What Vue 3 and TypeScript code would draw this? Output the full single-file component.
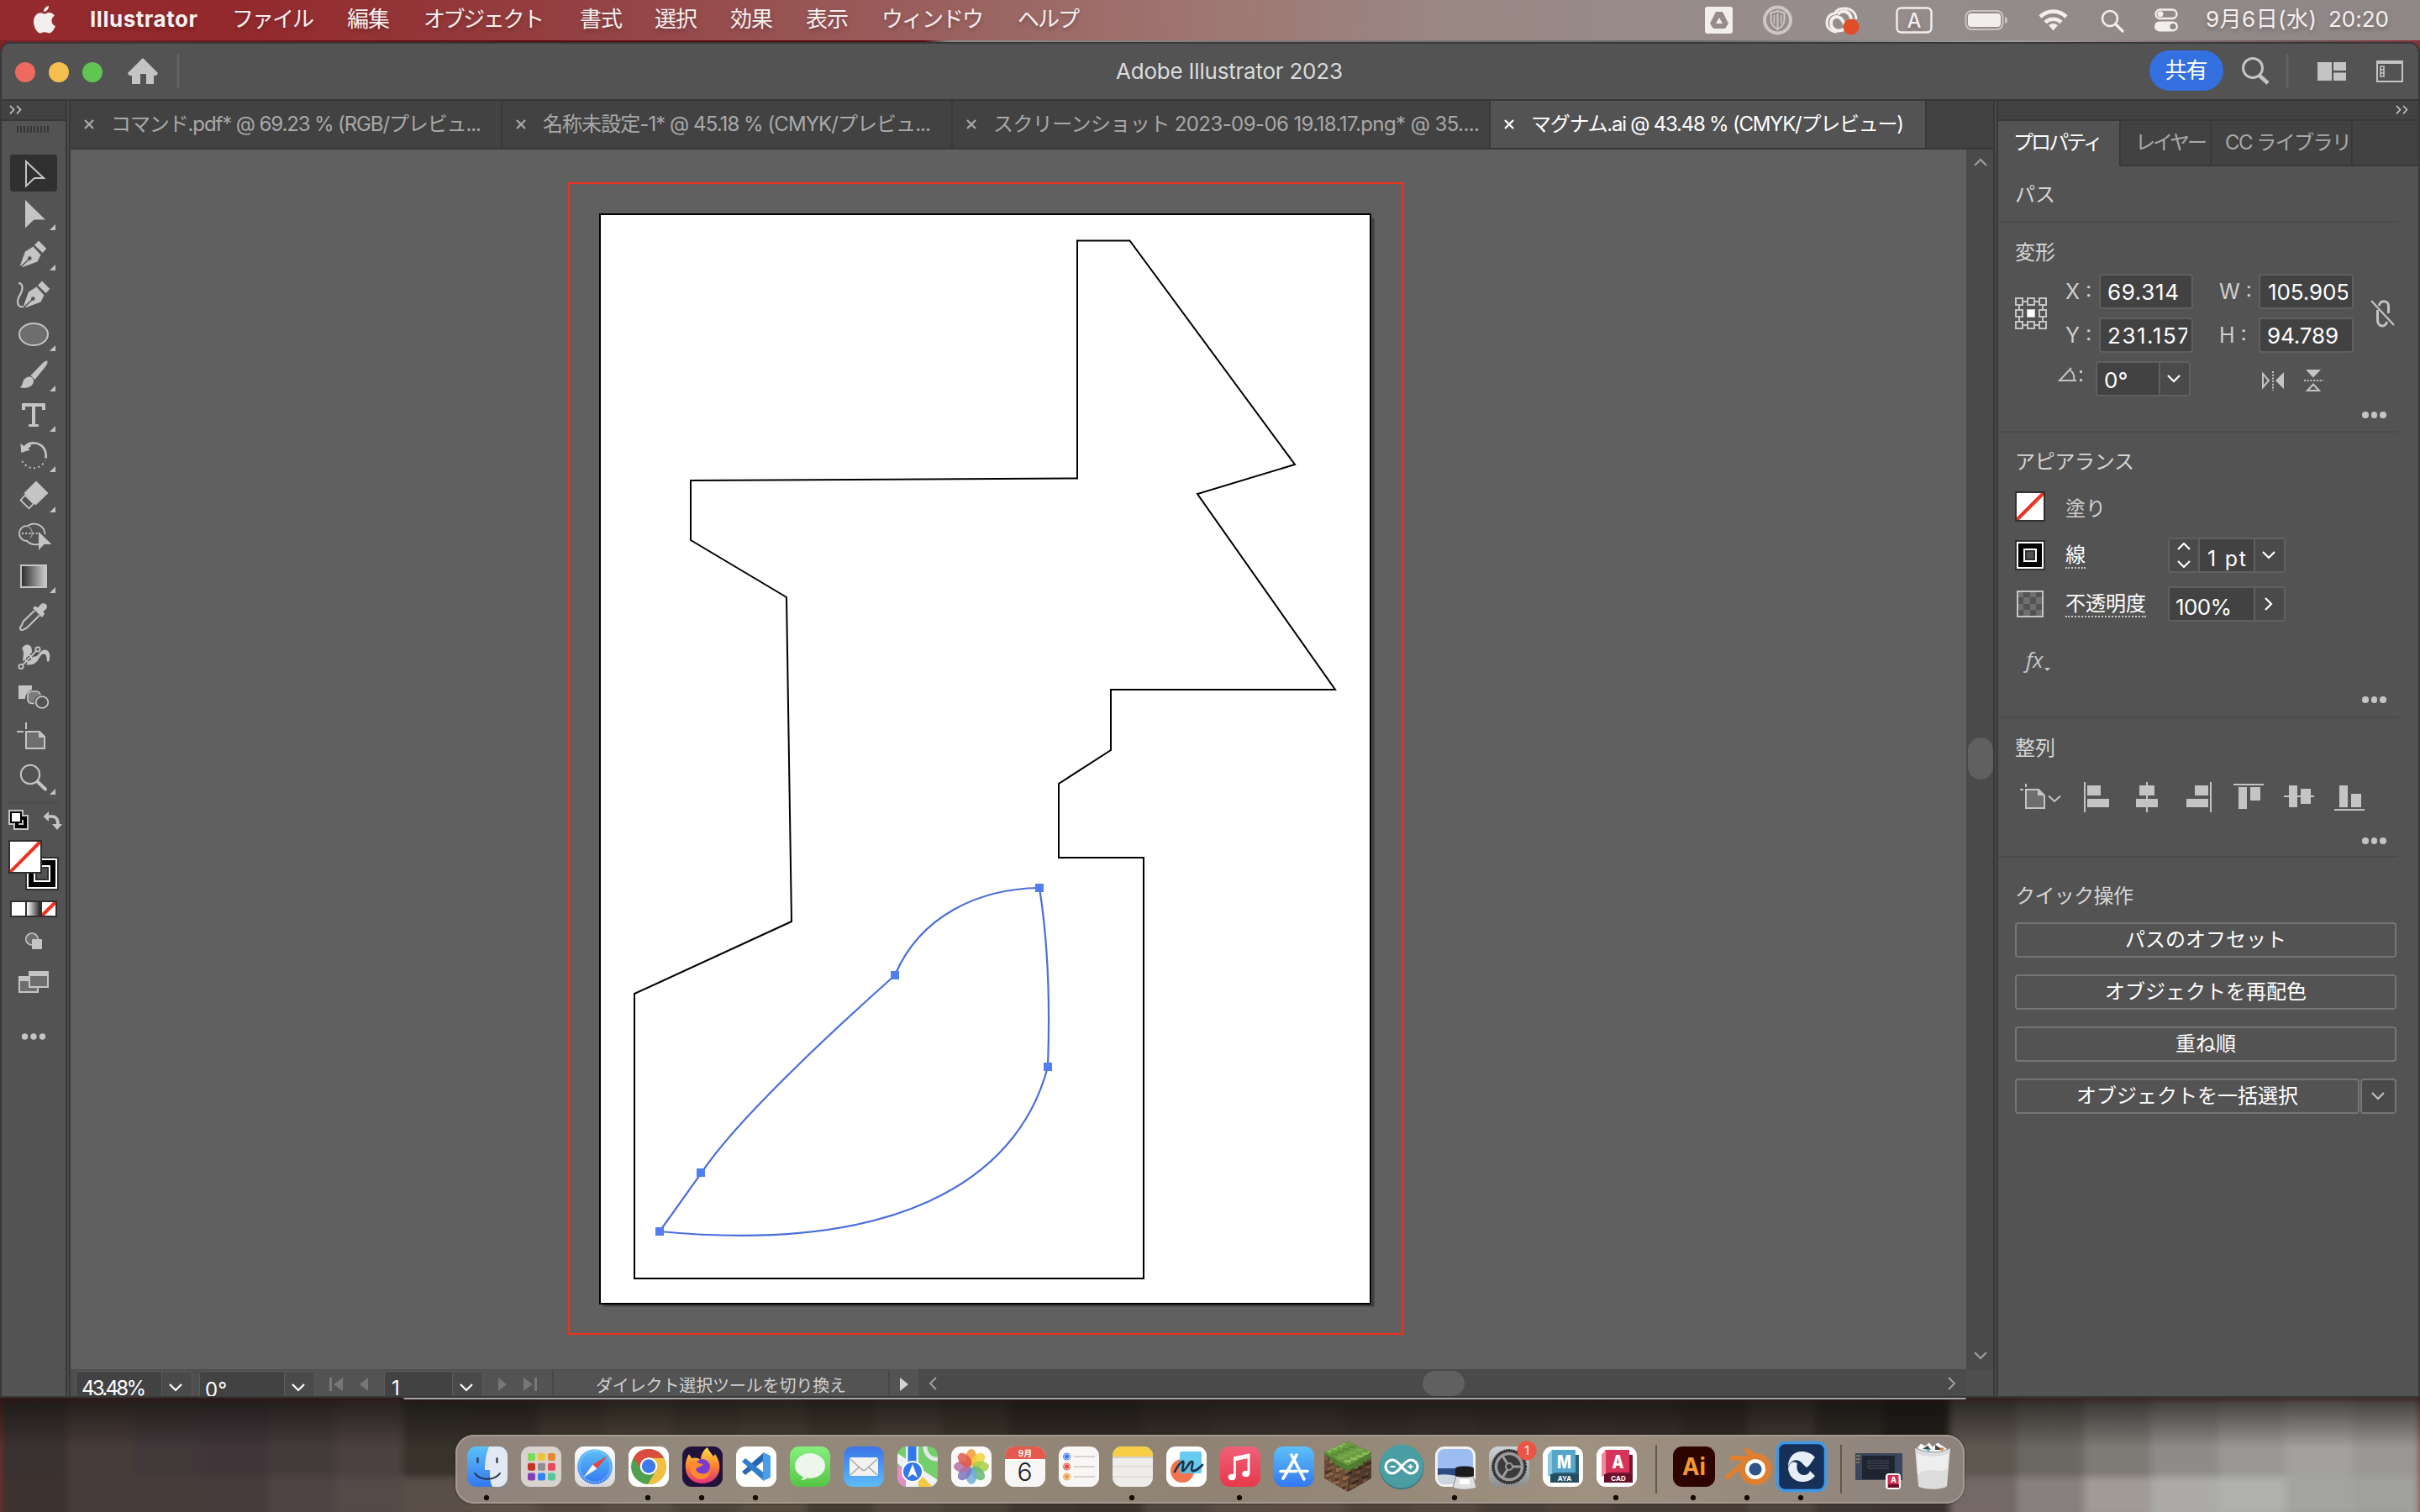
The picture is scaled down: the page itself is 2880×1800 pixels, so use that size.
<script setup lang="ts">
import type { Directive } from 'vue'

// Adjusts tracking so that a label takes the given width in pixels.
const vFit: Directive<HTMLElement, number> = {
  mounted(el, binding) {
    const count = (el.textContent ?? '').trim().length
    if (count < 2) return
    const gap = (binding.value - el.getBoundingClientRect().width) / (count - 1)
    el.style.letterSpacing = `${gap}px`
    el.style.marginRight = `${-gap}px`
  },
}

interface MenuItem { label: string; width: number; slot: number }
const menus: MenuItem[] = [
  { label: 'ファイル', width: 98, slot: 137 },
  { label: '編集', width: 51, slot: 91 },
  { label: 'オブジェクト', width: 144, slot: 186 },
  { label: '書式', width: 51, slot: 89 },
  { label: '選択', width: 51, slot: 90 },
  { label: '効果', width: 51, slot: 90 },
  { label: '表示', width: 51, slot: 90 },
  { label: 'ウィンドウ', width: 122, slot: 162 },
  { label: 'ヘルプ', width: 74, slot: 90 },
]

interface DocTab { title: string; width: number; text: number; active?: boolean }
const tabs: DocTab[] = [
  { title: 'コマンド.pdf* @ 69.23 % (RGB/プレビュ...', width: 514, text: 441 },
  { title: '名称未設定-1* @ 45.18 % (CMYK/プレビュ...', width: 536, text: 462 },
  { title: 'スクリーンショット 2023-09-06 19.18.17.png* @ 35....', width: 640, text: 579 },
  { title: 'マグナム.ai @ 43.48 % (CMYK/プレビュー)', width: 519, text: 444, active: true },
]

interface QuickAction { label: string; width: number }
const actions: QuickAction[] = [
  { label: 'パスのオフセット', width: 192 },
  { label: 'オブジェクトを再配色', width: 240 },
  { label: '重ね順', width: 72 },
]

const wallTop = ['#3a3230', '#463c39', '#41383a', '#40363a', '#443b3b', '#4b4140', '#37322a', '#38312a', '#463d34', '#4d4439', '#453d33', '#4a4237', '#41392f', '#4a4138', '#40382f', '#342d27', '#332d28', '#3a332c', '#3e362f', '#403830', '#3a332d', '#3d352f', '#39322d', '#3c342f', '#3a322d', '#342d28', '#423a35', '#2f2a25', '#241f1b', '#5e5851', '#6b6762', '#7e7a76', '#8e8c8a', '#999897', '#a2a1a0', '#999897']
const wallBottom = ['#3c3330', '#463c39', '#463c3a', '#463c3b', '#4e4445', '#544a48', '#5a4e48', '#5e5147', '#54493f', '#5a4f44', '#4e453a', '#574c40', '#453c32', '#54493e', '#4b4237', '#3f362e', '#3c332c', '#51463e', '#594c43', '#5a4c42', '#4f443b', '#53473e', '#493f37', '#4d4239', '#483d36', '#473c35', '#4f453f', '#3f3732', '#3e3432', '#746966', '#87807e', '#a19a97', '#acaba9', '#b0b0af', '#a3a3a2', '#a0a09f']

const launchColors = ['#7bdc54', '#f0c23c', '#e28a32', '#c53325', '#8f8f93', '#e6495c', '#8540b5', '#2f86f2', '#58c59b']
const petals = ['#f39a35', '#f2d13b', '#a9cc48', '#66b774', '#6caedb', '#7d74bd', '#b56fa2', '#e4564a']
const grass = Array.from({ length: 46 }, (_, i) => ({
  x: 6 + ((i * 37) % 52),
  y: 8 + ((i * 23) % 24),
  fill: ['#77a94a', '#5b8a37', '#8abb58'][i % 3],
}))
const soil = Array.from({ length: 90 }, (_, i) => ({
  x: 4 + ((i * 29) % 56),
  y: 26 + ((i * 17) % 42),
  fill: ['#7d5c42', '#4a3527', '#94694a', '#5e4431'][i % 4],
}))
</script>

<template>
  <div class="screen">
    <header class="menubar">
      <svg class="apple" width="28" height="34" viewBox="0 0 28 34"><path fill="#f4eeee" d="M19 1c.3 3.500-2.600 7-6 7-.4-3.200 2.700-6.600 6-7zM19.300 9c3 0 5.400 1.600 6.600 3.700-5.200 3-4.300 10.300 1 12.300-1.400 4-4.400 8.500-7.400 8.500-2 0-2.800-1.200-5.300-1.200-2.500 0-3.400 1.200-5.200 1.200C5.400 33.500 1 26.500 1 20 1 13.400 5 9.200 9.300 9.200c2.300 0 3.900 1.400 5.200 1.400C15.700 10.600 17.300 9 19.300 9z"/></svg>
      <span class="app-name"><span v-fit="128">Illustrator</span></span>
      <span v-for="m in menus" :key="m.label" class="menu" :style="{ width: m.slot + 'px' }"><span v-fit="m.width">{{ m.label }}</span></span>
      <span class="grow"></span>
      <svg width="576" height="48" viewBox="2020 0 576 48">
        <g fill="#f2eeee">
          <path fill-rule="evenodd" d="M2032 8h27a3 3 0 0 1 3 3v26a3 3 0 0 1-3 3h-27a3 3 0 0 1-3-3V11a3 3 0 0 1 3-3zM2042 14l-7 14 4 6h14l4-6-7-14zM2046 21l4 7h-8z"/>
          <g opacity=".6"><circle cx="2115.500" cy="24" r="15.500" fill="none" stroke="#f2eeee" stroke-width="4"/><path d="M2115.500 13l8 2.500v8c0 5-3.500 9-8 11.500-4.500-2.500-8-6.500-8-11.500v-8z" fill="none" stroke="#f2eeee" stroke-width="2"/><path d="M2114.500 16h2v18h-2zM2110.500 18h1.600v10h-1.600zM2119 18h1.600v10h-1.600z"/></g>
          <path d="M2186 38c-7 0-12-5-12-11 0-7 5-11 10-11 1-4 5-6 11-6 8 0 14 5 14 13" fill="none" stroke="#f2eeee" stroke-width="3"/>
          <path d="M2196 34c-3 2-9 4-13 1-6-4-5-14 2-15 6-1 8 5 12 12M2187 17c3-4 10-5 14 0 3 4 2 8 1 11" fill="none" stroke="#f2eeee" stroke-width="4"/>
          <circle cx="2203" cy="32" r="9.500" fill="#e04e26"/>
          <rect x="2257.500" y="9.500" width="41" height="29" rx="5" fill="none" stroke="#f2eeee" stroke-width="2.400"/>
          <text x="2278" y="32.500" text-anchor="middle" font-size="24" font-weight="500">A</text>
          <rect x="2339.500" y="13" width="44" height="22" rx="7" fill="none" stroke="#f2eeee" stroke-opacity=".55" stroke-width="2"/>
          <rect x="2342" y="16" width="39" height="16" rx="4"/><path d="M2386 20c4 1 4 7 0 8z" opacity=".6"/>
          <g fill="none" stroke="#f2eeee" stroke-width="4.600"><path d="M2428 20a22 22 0 0 1 31 0"/><path d="M2434 26.500a14 14 0 0 1 19 0"/></g><path d="M2443.500 36.500l-5.500-6.500a9 9 0 0 1 11 0z"/>
          <g fill="none" stroke="#f2eeee" stroke-width="2.600"><circle cx="2511" cy="22" r="9"/><path d="M2518 29l8 8" stroke-linecap="round" stroke-width="3.200"/></g>
          <rect x="2565.500" y="11.500" width="25" height="10.500" rx="5.200" fill="none" stroke="#f2eeee" stroke-width="2.400"/><circle cx="2571" cy="16.700" r="3.400"/>
          <rect x="2564" y="25.500" width="28" height="12" rx="6"/><circle cx="2586" cy="31.500" r="3.600" fill="#8e8686"/>
        </g>
      </svg>
      <span class="date"><span v-fit="132">9月6日(水)</span></span>
      <span class="time"><span v-fit="72">20:20</span></span>
    </header>
    <div class="strip"></div>

    <main class="window">
      <div class="titlebar">
        <svg width="240" height="66" viewBox="2 52 240 66">
          <circle cx="30" cy="86" r="12" fill="#ed6a5e"/><circle cx="70" cy="86" r="12" fill="#f5bf4f"/><circle cx="110" cy="86" r="12" fill="#61c554"/>
          <path fill="#c4c4c4" d="M170 69l18 18-2 3h-3v10h-9V88h-7v12h-10V90h-3l-2-3z"/>
          <path d="M212 64v40" stroke="#636363" stroke-width="3"/>
        </svg>
        <span class="app-title"><span v-fit="270">Adobe Illustrator 2023</span></span>
        <button class="share"><span v-fit="51">共有</span></button>
        <svg class="title-tools" width="220" height="66" viewBox="2658 52 220 66">
          <g fill="none" stroke="#c4c4c4" stroke-width="3"><circle cx="2681" cy="81" r="11.500"/><path d="M2689 90l10 9" stroke-width="4.600"/></g>
          <path d="M2722 64v40" stroke="#636363" stroke-width="3"/>
          <path fill="#c4c4c4" d="M2758 74h17v22h-17zM2777 74h15v10h-15zM2777 86.500h15V96h-15z"/>
          <path fill="#c4c4c4" fill-rule="evenodd" d="M2828 72h32v26h-32zM2830 76v20h28V76z"/><path fill="none" stroke="#c4c4c4" stroke-width="1.600" d="M2833 79h4v12h-4zM2833 83h4M2833 87h4"/>
        </svg>
      </div>

      <div class="body">
        <aside class="toolbar">
          <div class="tool-head"><svg width="76" height="22" viewBox="2 120 76 22"><path d="M12 126l4.500 4.500L12 135.500M20 126l4.500 4.500-4.500 5" fill="none" stroke="#c4c4c4" stroke-width="1.700"/></svg></div>
          <div class="grip"><i v-for="n in 10" :key="n"></i></div>
          <div class="tools">
            <svg viewBox="2 0 76 48"><rect x="12" y="2" width="56" height="44" rx="4" fill="#303030"/><path d="M31 10.200L52 30H41l-10 9.500z" fill="none" stroke="#c4c4c4" stroke-width="2"/></svg>
            <svg viewBox="2 0 76 48"><path d="M30 8l24 23.600H40.500L30 41.500z"/><path d="M59 44h7v-7z"/></svg>
            <svg viewBox="2 0 76 48"><path d="M46 8.500l9.300 9.500-4.600 5L41 13.800z"/><path d="M24 38l6-16.500 9.500-6 9 10-4 8L27 40z"/><path d="M25 39.500L35 30" stroke="#535353" stroke-width="1.500"/><circle cx="35.300" cy="29.600" r="2.300" fill="#535353"/><path d="M59 44h7v-7z"/></svg>
            <svg viewBox="2 0 76 48"><path d="M50 8.500l9.300 9.500-4.600 5L45 13.800z"/><path d="M28 38l6-16.500 9.500-6 9 10-4 8L31 40z"/><path d="M29 39.500L39 30" stroke="#535353" stroke-width="1.500"/><circle cx="39.300" cy="29.600" r="2.300" fill="#535353"/><path d="M22 11c5 0 5 5 4 9-1 5-5 7-5 13 0 5 3 7 7 6" fill="none" stroke="#c4c4c4" stroke-width="2.200"/></svg>
            <svg viewBox="2 0 76 48"><ellipse cx="40" cy="24" rx="17" ry="13" fill="#6e6e6e" stroke="#c4c4c4" stroke-width="2"/><path d="M59 44h7v-7z"/></svg>
            <svg viewBox="2 0 76 48"><path d="M36.500 25L51 10c2-2 5-3 5.500-2s-.5 4-2.500 6.500L41.500 30z"/><path d="M35 26.500c3 0 5.500 2.500 5 6-1 6-9 9-16.500 6.500 3-1.500 3-4 4-7s4-5.500 7.500-5.500z"/><path d="M59 44h7v-7z"/></svg>
            <svg viewBox="2 0 76 48"><path d="M27 10h26a1 1 0 0 1 1 1v7h-4v-4h-8v21h3a1 1 0 0 1 1 1v2H34v-2a1 1 0 0 1 1-1h3V14h-8v4h-4v-7a1 1 0 0 1 1-1z"/><path d="M59 44h7v-7z"/></svg>
            <svg viewBox="2 0 76 48"><path d="M31 12.500c3-2.500 7-3.500 11-3 8 1 14 8 12.500 18" fill="none" stroke="#c4c4c4" stroke-width="2.600"/><path d="M24.300 10l4 3 6-4 3 4-4 2.500 2.400 2L25.300 21z"/><path d="M26.500 31a15 15 0 0 0 27-.5" fill="none" stroke="#c4c4c4" stroke-width="2" stroke-dasharray="2 3.500"/><path d="M59 44h7v-7z"/></svg>
            <svg viewBox="2 0 76 48"><path d="M43 6.500L57.500 21 42.500 35.500 28.500 21z"/><path d="M30 23.500L40 33.500 34.500 39.300 24.500 29.500z" fill="none" stroke="#c4c4c4" stroke-width="1.800"/><path d="M59 44h7v-7z"/></svg>
            <svg viewBox="2 0 76 48"><g fill="none" stroke="#c4c4c4" stroke-width="1.800"><path d="M33 12a13 13 0 0 1 20.500 10M46 34c-5 1-10 0-14-4"/><path d="M33 12.500c-5-1.500-10 3-10 8.500s5 10 10 8.500"/><path d="M33 12.500a9 9 0 0 1 3 14" stroke="#8a8a8a"/><path d="M26 21h20" stroke-dasharray="2 2.200"/></g><path d="M46 19l15.500 15h-9L46 41z"/></svg>
            <svg viewBox="2 0 76 48"><defs><linearGradient id="toolGrad"><stop offset="0" stop-color="#2a2a2a"/><stop offset="1" stop-color="#d0d0d0"/></linearGradient></defs><rect x="25" y="11" width="30" height="26" fill="url(#toolGrad)" stroke="#c4c4c4" stroke-width="2"/><path d="M59 44h7v-7z"/></svg>
            <svg viewBox="2 0 76 48"><path d="M39 14l3-2.500 3 2 3-3.500c3-3.500 8-1 8 2 0 2.500-2 4-4.500 6l1.500 3-3 4z"/><path d="M41 17L28 29.500c-1.500 2-1 4-3 6s-1 5 1.500 4.500 4-2 6-3L47 22.500" fill="none" stroke="#c4c4c4" stroke-width="2"/></svg>
            <svg viewBox="2 0 76 48"><path d="M27 17c-2-4 2-8 6-7.500 4 .5 5 4 5 8l1.500 6c3 .5 5-.5 7.500-4 3-4 6.500-5 9.500-3 3.500 2.500 3 8 2 13h-2.500c0-4-.5-9-4-9-4 0-5 6-9 10-4 4-12 4-15 .5-2-3 .5-7-.2-13-.4-4-1.500-3-.8-1z"/><path d="M25 35.500L45 15" stroke="#535353" stroke-width="5"/><path d="M25 35.500L45 15" stroke="#c4c4c4" stroke-width="1.800"/><g fill="#535353" stroke="#c4c4c4" stroke-width="1.800"><circle cx="25" cy="35.500" r="2.600"/><circle cx="45" cy="15" r="2.600"/></g><circle cx="34" cy="26" r="4" fill="none" stroke="#c4c4c4" stroke-width="1.800"/></svg>
            <svg viewBox="2 0 76 48"><path d="M22 10h16v5c-5 2-8 6-8 11h-8z"/><rect x="33" y="17" width="15" height="14.500" rx="5" fill="#7c7c7c" stroke="#c4c4c4" stroke-width="1.700"/><ellipse cx="50" cy="30" rx="9.500" ry="9" fill="#535353"/><ellipse cx="50" cy="30" rx="7.300" ry="6.800" fill="none" stroke="#c4c4c4" stroke-width="1.800"/></svg>
            <svg viewBox="2 0 76 48"><path d="M31 6v8M20 17h8" stroke="#c4c4c4" stroke-width="2"/><path d="M31 17h16l6 6v14H31z" fill="#6e6e6e" stroke="#c4c4c4" stroke-width="2"/><path d="M46 16l8 8h-8z"/></svg>
            <svg viewBox="2 0 76 48"><circle cx="36" cy="20" r="11.200" fill="none" stroke="#c4c4c4" stroke-width="2"/><path d="M44.500 28.500l9.500 9" stroke="#c4c4c4" stroke-width="4" stroke-linecap="round"/><path d="M59 44h7v-7z"/></svg>
          </div>
          <svg class="swatches" width="76" height="300" viewBox="2 950 76 300">
            <defs><linearGradient id="swGrad"><stop offset="0" stop-color="#fff"/><stop offset="1" stop-color="#222"/></linearGradient></defs>
            <path d="M10 955.500h60" stroke="#4c4c4c" stroke-width="2"/>
            <path fill="#c4c4c4" d="M10 964h18v6h6v18H16v-6h-6z"/><path fill="#000" d="M18 972h14v14H18z"/><path fill="#c4c4c4" d="M22 976h6v6h-6z"/><rect x="13" y="967" width="12" height="12" fill="#fff" stroke="#000" stroke-width="2"/>
            <path d="M57 972h5c5 0 7 3 7 10" fill="none" stroke="#c4c4c4" stroke-width="3.600"/><path fill="#c4c4c4" d="M51.500 972l6.500-6v12zM62 981h12l-6 7z"/>
            <rect x="31" y="1021" width="38" height="38" fill="#000" stroke="#303030" stroke-width="2"/><rect x="33" y="1023" width="34" height="34" fill="#000" stroke="#fff" stroke-width="2"/><rect x="41" y="1031" width="18" height="18" fill="#535353" stroke="#fff" stroke-width="2"/><rect x="43" y="1033" width="14" height="14" fill="none" stroke="#303030" stroke-width="2"/>
            <rect x="11" y="1001" width="38" height="38" fill="#fff" stroke="#303030" stroke-width="2"/><path d="M12 1035.500V1038h3l33-33v-3h-3z" fill="#ea3323"/>
            <path fill="#303030" d="M12 1072h56v20H12z"/><path fill="#fff" d="M14 1074h16v16H14zM50 1074h16v16H50z"/><path fill="url(#swGrad)" d="M32 1074h16v16H32z"/><path fill="#ea3323" d="M50 1087v3h3l13-13v-3h-3z"/>
            <ellipse cx="38" cy="1118" rx="7.300" ry="7" fill="#6e6e6e" stroke="#c4c4c4" stroke-width="1.600"/><rect x="38" y="1118" width="12" height="12" rx="1" fill="#c4c4c4"/>
            <rect x="23" y="1163" width="22" height="18" fill="#6e6e6e" stroke="#c4c4c4" stroke-width="2"/><path fill="#c4c4c4" d="M22 1162h12v6H22z"/><rect x="35" y="1157" width="22" height="18" fill="#6e6e6e" stroke="#c4c4c4" stroke-width="2"/><path fill="#c4c4c4" d="M34 1156h24v6H34z"/>
            <g fill="#c4c4c4"><circle cx="29.500" cy="1234" r="3.700"/><circle cx="40" cy="1234" r="3.700"/><circle cx="50.500" cy="1234" r="3.700"/></g>
          </svg>
        </aside>
        <div class="gutter"></div>

        <section class="document">
          <nav class="tabs">
            <div v-for="t in tabs" :key="t.title" class="tab" :class="{ active: t.active }" :style="{ width: t.width + 'px' }">
              <svg width="14" height="14" viewBox="0 0 14 14"><path d="M2 2l10 10M12 2L2 12" fill="none" stroke="currentColor" stroke-width="2.300"/></svg>
              <span v-fit="t.text">{{ t.title }}</span>
            </div>
          </nav>
          <div class="workspace">
            <svg class="canvas" width="2256" height="1452" viewBox="84 178 2256 1452">
              <rect x="677" y="218" width="992" height="1370" fill="none" stroke="#ea3323" stroke-width="2.200"/>
              <path d="M718 1554h916V260" fill="none" stroke="#404040" stroke-width="3"/>
              <rect x="714" y="255" width="917" height="1297" fill="#fff" stroke="#000" stroke-width="2"/>
              <path d="M1282 286.500H1344.500L1541 553 1425 588 1589 821H1322V893L1260 933V1021H1361V1522H755V1183L942 1097 936 711 822 643V572L1282 569.500Z" fill="none" stroke="#000" stroke-width="2"/>
              <path d="M785 1466L835 1396C870 1343 960 1255 1065 1161C1095 1090 1165 1058 1237 1057C1247 1120 1250 1190 1247 1270C1210 1410 1060 1492 785 1466Z" fill="none" stroke="#4a6fd8" stroke-width="2.200"/>
              <g fill="#4f7ff0"><rect x="1232" y="1052" width="10" height="10"/><rect x="1060" y="1156" width="10" height="10"/><rect x="829" y="1391" width="10" height="10"/><rect x="780" y="1461" width="10" height="10"/><rect x="1242" y="1265" width="10" height="10"/></g>
            </svg>
            <div class="vscroll">
              <svg width="32" height="30" viewBox="0 0 32 30"><path d="M10 19l7-7 7 7" fill="none" stroke="#a0a0a0" stroke-width="2"/></svg>
              <i class="vthumb"></i>
              <svg class="end" width="32" height="34" viewBox="0 0 32 34"><path d="M10 14l7 7 7-7" fill="none" stroke="#a0a0a0" stroke-width="2"/></svg>
            </div>
          </div>
          <footer class="status">
            <div class="field zoom"><span v-fit="77">43.48%</span></div>
            <div class="drop"><svg width="18" height="10" viewBox="0 0 18 10"><path d="M2 1l7 7 7-7"/></svg></div>
            <div class="field rot"><span>0°</span></div>
            <div class="drop"><svg width="18" height="10" viewBox="0 0 18 10"><path d="M2 1l7 7 7-7"/></svg></div>
            <svg class="nav" width="82" height="32" viewBox="375 1630 82 32"><path fill="#777" d="M392 1640h3v16h-3zM408 1640v16l-11-8zM438 1640v16l-10-8z"/></svg>
            <div class="field page"><span>1</span></div>
            <div class="drop"><svg width="18" height="10" viewBox="0 0 18 10"><path d="M2 1l7 7 7-7"/></svg></div>
            <svg class="nav" width="82" height="32" viewBox="576 1630 82 32"><path fill="#777" d="M594 1640v16l10-8zM624 1640v16l11-8zM637 1640h3v16h-3z"/></svg>
            <div class="hint"><span v-fit="298">ダイレクト選択ツールを切り換え</span></div>
            <svg class="nav" width="34" height="32" viewBox="1060 1630 34 32"><path fill="#d4d4d4" d="M1072 1640v16l10-8z"/></svg>
            <div class="hscroll">
              <svg width="32" height="32" viewBox="1094 1630 32 32"><path d="M1115 1640l-7 7 7 7" fill="none" stroke="#a0a0a0" stroke-width="2"/></svg>
              <i class="hthumb"></i>
              <svg width="32" height="32" viewBox="2308 1630 32 32"><path d="M2320 1640l7 7-7 7" fill="none" stroke="#a0a0a0" stroke-width="2"/></svg>
            </div>
          </footer>
        </section>
        <div class="gutter"></div>

        <aside class="panel">
          <div class="panel-head"><svg width="30" height="22" viewBox="2848 120 30 22"><path d="M2852 126l4.500 4.500-4.500 5M2860 126l4.500 4.500-4.500 5" fill="none" stroke="#c4c4c4" stroke-width="1.700"/></svg></div>
          <nav class="ptabs">
            <div class="ptab on"><span v-fit="107">プロパティ</span></div>
            <div class="ptab second"><span v-fit="86">レイヤー</span></div>
            <div class="ptab third"><span v-fit="151">CC ライブラリ</span></div>
          </nav>
          <section class="sec kind"><h3>パス</h3></section>

          <section class="sec transform">
            <h3>変形</h3>
            <div class="xy">
              <svg class="ref" width="38" height="38" viewBox="0 0 38 38"><g fill="none" stroke="#c4c4c4" stroke-width="2"><path d="M5 5h28v28H5z"/></g><g fill="#535353" stroke="#c4c4c4" stroke-width="2"><rect v-for="n in 9" :key="n" :x="1 + ((n - 1) % 3) * 14" :y="1 + Math.floor((n - 1) / 3) * 14" width="8" height="8"/></g><path d="M15 15h8v8h-8z" fill="#fff"/></svg>
              <label>X :</label><div class="box"><span v-fit="85">69.314</span></div>
              <label class="c5">W :</label><div class="box wide"><span v-fit="97">105.905</span></div>
              <svg class="link" width="30" height="34" viewBox="0 0 30 34"><g fill="none" stroke="#c4c4c4" stroke-width="3"><path d="M10.500 8c0-7 11-7 11 0v9M8.500 13v12c0 9 10 9 11 2"/><path d="M1 2l27 29" stroke-width="2.200"/></g></svg>
              <label class="r2">Y :</label><div class="box r2c3"><span v-fit="98">231.157</span></div>
              <label class="c5 r2">H :</label><div class="box r2c6"><span v-fit="85">94.789</span></div>
            </div>
            <div class="angle">
              <svg width="32" height="42" viewBox="2449 429 32 42"><path d="M2465 437l-14 15h20M2464 440c4 3 5 7 4 12" fill="none" stroke="#c4c4c4" stroke-width="2"/><path fill="#c4c4c4" d="M2475 440h3v3h-3zM2475 450h3v3h-3z"/></svg>
              <div class="combo"><div class="val">0°</div><div class="dd"><svg width="18" height="10" viewBox="0 0 18 10"><path d="M2 1l7 7 7-7"/></svg></div></div>
              <svg class="flips" width="80" height="42" viewBox="2688 430 80 42"><path d="M2693 445v16l7-8z" fill="none" stroke="#c4c4c4" stroke-width="2"/><path fill="#c4c4c4" d="M2718 443v20l-10-10zM2744 440h18l-9 9.500z"/><path d="M2705 442v23M2742 453h23" stroke="#c4c4c4" stroke-width="2" stroke-dasharray="2 1.700"/><path d="M2746 465h14l-7-7.500z" fill="none" stroke="#c4c4c4" stroke-width="2"/></svg>
            </div>
            <div class="more tall"><i></i><i></i><i></i></div>
          </section>

          <section class="sec appear">
            <h3><span v-fit="142">アピアランス</span></h3>
            <div class="row">
              <svg width="36" height="36" viewBox="0 0 36 36"><rect x="1" y="1" width="34" height="34" fill="#fff" stroke="#303030" stroke-width="2"/><path d="M2 31v3h3L34 5V2h-3z" fill="#ea3323"/></svg>
              <span class="plain">塗り</span>
            </div>
            <div class="row">
              <svg width="36" height="36" viewBox="0 0 36 36"><rect width="36" height="36" fill="#303030"/><rect x="3" y="3" width="30" height="30" fill="#000" stroke="#fff" stroke-width="2"/><rect x="11" y="11" width="14" height="14" fill="#303030" stroke="#fff" stroke-width="2"/><path d="M14 14h8v8h-8z" fill="#535353"/></svg>
              <span class="dotted">線</span>
              <div class="combo weight"><div class="spin"><svg width="18" height="32" viewBox="0 0 18 32"><path d="M2 9l7-7 7 7M2 23l7 7 7-7"/></svg></div><div class="val pt"><span v-fit="46">1 pt</span></div><div class="dd"><svg width="18" height="10" viewBox="0 0 18 10"><path d="M2 1l7 7 7-7"/></svg></div></div>
            </div>
            <div class="row">
              <svg width="36" height="36" viewBox="0 0 36 36"><rect x="3" y="3" width="30" height="30" fill="#535353" stroke="#c4c4c4" stroke-width="2"/><path fill="#6e6e6e" d="M4 4h6v6H4zM18 4h7v6h-7zM10 10h8v8h-8zM25 10h7v8h-7zM4 18h6v7H4zM18 18h7v7h-7zM10 25h8v7h-8zM25 25h7v7h-7z"/></svg>
              <span class="dotted">不透明度</span>
              <div class="combo weight"><div class="val pct"><span v-fit="67">100%</span></div><div class="dd"><svg width="10" height="18" viewBox="0 0 10 18"><path d="M1 2l7 7-7 7"/></svg></div></div>
            </div>
            <div class="fx">fx<svg width="8" height="5" viewBox="0 0 8 5"><path d="M0 0h7l-3.500 4z" fill="#c4c4c4"/></svg></div>
            <div class="more"><i></i><i></i><i></i></div>
          </section>

          <section class="sec align">
            <h3>整列</h3>
            <svg width="430" height="46" viewBox="2398 925 430 46" fill="#c4c4c4">
              <path d="M2411 933v4M2404 940h4" stroke="#c4c4c4" stroke-width="2"/><path d="M2411 940h15l7 7v15h-22z" fill="#6e6e6e" stroke="#c4c4c4" stroke-width="2"/><path d="M2425 939l8 8h-8z"/><path d="M2438 947.500l7 6.500 7-6.500" fill="none" stroke="#c4c4c4" stroke-width="2"/>
              <path d="M2480 931h2v36h-2zM2484 935h16v12h-16zM2484 951h26v10h-26z"/>
              <path d="M2554 931h2v36h-2zM2546 935h18v12h-18zM2542 951h26v10h-26z"/>
              <path d="M2630 931h2v36h-2zM2612 935h16v12h-16zM2602 951h26v10h-26z"/>
              <path d="M2658 933h36v2h-36zM2664 937h10v26h-10zM2678 937h12v16h-12z"/>
              <path d="M2718 947h36v2h-36zM2724 935h10v26h-10zM2738 939h12v18h-12z"/>
              <path d="M2778 963h36v2h-36zM2784 935h10v26h-10zM2798 945h12v16h-12z"/>
            </svg>
            <div class="more"><i></i><i></i><i></i></div>
          </section>

          <section class="quick">
            <h3><span v-fit="141">クイック操作</span></h3>
            <button v-for="a in actions" :key="a.label" class="act"><span v-fit="a.width">{{ a.label }}</span></button>
            <div class="split"><button class="act"><span v-fit="264">オブジェクトを一括選択</span></button><button class="act arrow"><svg width="18" height="10" viewBox="0 0 18 10"><path d="M2 1l7 7 7-7"/></svg></button></div>
          </section>
        </aside>
      </div>
    </main>

    <footer class="desktop">
      <div class="backdrop">
        <div class="wall"><i v-for="(c, i) in wallTop" :key="i" :style="{ background: c }"></i></div>
        <div class="wall low"><i v-for="(c, i) in wallBottom" :key="i" :style="{ background: c }"></i></div>
      </div>
      <div class="shade"></div>
      <div class="edge"></div>
      <div class="dock">
        <svg class="app run" viewBox="0 0 64 82">
          <defs>
            <clipPath id="tile"><rect x="8" y="14" width="48" height="48" rx="11"/></clipPath>
            <linearGradient id="blueV" x2="0" y2="1"><stop offset="0" stop-color="#5cc0f8"/><stop offset="1" stop-color="#3378f0"/></linearGradient>
            <linearGradient id="blueW" x2="0" y2="1"><stop offset="0" stop-color="#3c74ea"/><stop offset="1" stop-color="#5cbcf7"/></linearGradient>
            <linearGradient id="whiteV" x2="0" y2="1"><stop offset="0" stop-color="#fff"/><stop offset="1" stop-color="#d8d8dc"/></linearGradient>
            <linearGradient id="greenV" x2="0" y2="1"><stop offset="0" stop-color="#86f07e"/><stop offset="1" stop-color="#55c545"/></linearGradient>
            <linearGradient id="redV" x2="0" y2="1"><stop offset="0" stop-color="#f0607a"/><stop offset="1" stop-color="#e6394a"/></linearGradient>
            <linearGradient id="fireV" x2="0" y2="1"><stop offset="0" stop-color="#fde24c"/><stop offset=".5" stop-color="#f9862f"/><stop offset="1" stop-color="#e4307c"/></linearGradient>
            <linearGradient id="greyV" x2="0" y2="1"><stop offset="0" stop-color="#ccd4d8"/><stop offset="1" stop-color="#8e8e90"/></linearGradient>
          </defs>
          <g clip-path="url(#tile)"><rect x="8" y="14" width="48" height="48" fill="url(#blueV)"/><path d="M34 14c-4 10-5 19-5 28h6c0 7 0 14 3 20h20V14z" fill="#e3e9f4"/></g>
          <path d="M20.500 28v5M43.500 28v5" stroke="#243246" stroke-width="2.200" stroke-linecap="round"/><path d="M17 46c7 9 23 9 30 0" fill="none" stroke="#243246" stroke-width="2" stroke-linecap="round"/>
        </svg>
        <svg class="app" viewBox="0 0 64 82"><rect x="8" y="14" width="48" height="48" rx="11" fill="#d8d3cf"/><rect v-for="(c, i) in launchColors" :key="c" :x="16 + (i % 3) * 12" :y="22 + Math.floor(i / 3) * 11.700" width="9" height="9" rx="2" :fill="c"/></svg>
        <svg class="app" viewBox="0 0 64 82"><rect x="8" y="14" width="48" height="48" rx="11" fill="url(#whiteV)"/><circle cx="32" cy="38" r="20.800" fill="url(#blueV)"/><circle cx="32" cy="38" r="18.500" fill="none" stroke="#a8dcf8" stroke-width="2" stroke-dasharray=".7 1.200"/><path d="M47 25L29.500 35.500l5 5z" fill="#e8453c"/><path d="M18 51l11.500-15.500 5 5z" fill="#f4f4f4"/></svg>
        <svg class="app run" viewBox="0 0 64 82"><rect x="8" y="14" width="48" height="48" rx="11" fill="#fff"/><circle cx="32" cy="38" r="21" fill="#50a050"/><path d="M32 27.500h18.200A21 21 0 0 1 31 59l10-17z" fill="#f3bf42"/><path d="M13.800 27.500a21 21 0 0 1 36.400 0H32L22 40z" fill="#d94c3e"/><circle cx="32" cy="37.500" r="10.300" fill="#fff"/><circle cx="32" cy="37.500" r="8.200" fill="#3f7be8"/></svg>
        <svg class="app run" viewBox="0 0 64 82"><rect x="8" y="14" width="48" height="48" rx="11" fill="#20123a"/><path d="M38 15c1 4 5 7 7 11l2-3c5 7 7 15 4 23-3 7-10 12-19 12-11 0-19-7-20-17-1-7 1-13 4-18l3 5c3-1 8-1 11 2 0-6 3-12 8-15z" fill="url(#fireV)"/><circle cx="32" cy="38" r="9" fill="#7a3bd0"/><path d="M16 32c5-2 9-1 12 2l5 1c-3 4-8 3-9 7 4 6 13 6 17 0 0 7-4 11-11 11-8 0-14-7-14-21z" fill="#fb8b32"/></svg>
        <svg class="app run" viewBox="0 0 64 82"><rect x="8" y="14" width="48" height="48" rx="11" fill="#fff"/><path d="M41 21L15 44l4 4 23-18z" fill="#2a66ad"/><path d="M41 55L15 32l4-4 23 18z" fill="#2f7ecb"/><path d="M40 21l9 4v26l-9 4z" fill="#4a9de8"/></svg>
        <svg class="app" viewBox="0 0 64 82"><rect x="8" y="14" width="48" height="48" rx="11" fill="url(#greenV)"/><ellipse cx="32" cy="37" rx="18" ry="15" fill="#edf6ea"/><path d="M24 48c0 3-1 5-3 6 4 0 7-1 9-4z" fill="#e4f2e0"/></svg>
        <svg class="app" viewBox="0 0 64 82"><rect x="8" y="14" width="48" height="48" rx="11" fill="url(#blueW)"/><rect x="15" y="27" width="34" height="22" rx="2.500" fill="#f2f2f2"/><path d="M16 29l13 12c2 2 4 2 6 0l13-12M16 48l11-10M48 48L37 38" fill="none" stroke="#a4a4a4" stroke-width="1.300"/></svg>
        <svg class="app" viewBox="0 0 64 82"><g clip-path="url(#tile)"><rect x="8" y="14" width="48" height="48" fill="#72cf6c"/><path d="M8 36l14 10v16H8z" fill="#e48cc4"/><path d="M8 22l48 32v10H44L8 34z" fill="#f0f1f4"/><path d="M34 46l16 16H33z" fill="#f5c842"/><path d="M18 14h15v48H18z" fill="#f0f1f4"/><path d="M20.500 14h10v20h-10z" fill="#2f78f0"/><circle cx="55" cy="15" r="14" fill="none" stroke="#e4e6e8" stroke-width="5"/></g><circle cx="26" cy="44" r="12" fill="#3478f0" stroke="#fff" stroke-width="2"/><path d="M26 35l6 16-6-4-6 4z" fill="#fff"/></svg>
        <svg class="app" viewBox="0 0 64 82"><rect x="8" y="14" width="48" height="48" rx="11" fill="#fafafa"/><ellipse v-for="(c, i) in petals" :key="c" cx="32" cy="27" rx="6.400" ry="10" :fill="c" opacity=".85" :transform="`rotate(${i * 45} 32 38)`"/></svg>
        <svg class="app" viewBox="0 0 64 82"><g clip-path="url(#tile)"><rect x="8" y="14" width="48" height="48" fill="#f7f6f4"/><rect x="8" y="14" width="48" height="15" fill="#e45a4e"/></g><text x="32" y="26" text-anchor="middle" font-size="10" fill="#fff" font-weight="600">9月</text><text x="31.500" y="54.500" text-anchor="middle" font-size="30" fill="#222" font-weight="300">6</text></svg>
        <svg class="app" viewBox="0 0 64 82"><rect x="8" y="14" width="48" height="48" rx="11" fill="#f8f7f5"/><path d="M26 26h25M26 38h25M26 50h25" stroke="#c9c9c6" stroke-width="1.300"/><g fill="none" stroke-width="1"><circle cx="17.500" cy="26" r="4" stroke="#3478f6"/><circle cx="17.500" cy="38" r="4" stroke="#e84a40"/><circle cx="17.500" cy="50" r="4" stroke="#f09a38"/></g><circle cx="17.500" cy="26" r="2.700" fill="#3478f6"/><circle cx="17.500" cy="38" r="2.700" fill="#e84a40"/><circle cx="17.500" cy="50" r="2.700" fill="#f09a38"/></svg>
        <svg class="app run" viewBox="0 0 64 82"><g clip-path="url(#tile)"><rect x="8" y="14" width="48" height="48" fill="#eeedea"/><rect x="8" y="14" width="48" height="12" fill="#f7ce45"/><path d="M8 27h48" stroke="#b9b5aa"/><path d="M8 38h48M8 50h48" stroke="#d2d0cb"/></g></svg>
        <svg class="app" viewBox="0 0 64 82"><rect x="8" y="14" width="48" height="48" rx="11" fill="#fff"/><circle cx="27" cy="43" r="14" fill="#f2744e"/><rect x="24" y="20" width="26" height="26" rx="2" fill="#56c5ee" opacity=".9"/><path d="M18 44c3-6 6-10 9-12 4-2-2 12 1 11 4-1 8-13 11-11 2 2-3 10 0 11 4 1 8-3 12-7" fill="none" stroke="#17324d" stroke-width="2.600" stroke-linecap="round"/></svg>
        <svg class="app run" viewBox="0 0 64 82"><rect x="8" y="14" width="48" height="48" rx="11" fill="url(#redV)"/><path d="M25.500 50V27.500L42 24v22M25.500 30L42 26.500" fill="none" stroke="#fff" stroke-width="2.800"/><ellipse cx="22.200" cy="50.500" rx="4.600" ry="3.800" fill="#fff"/><ellipse cx="38.800" cy="46.500" rx="4.600" ry="3.800" fill="#fff"/></svg>
        <svg class="app" viewBox="0 0 64 82"><rect x="8" y="14" width="48" height="48" rx="11" fill="url(#blueV)"/><path d="M35 24L21 49M29 24l15 29M16 43.500h19M41 43.500h7M19 52l2-3" fill="none" stroke="#fff" stroke-width="3.600" stroke-linecap="round"/></svg>
        <svg class="app" viewBox="0 0 64 82">
          <defs><clipPath id="grassTop"><path d="M32 8l28 13-28 16L4 21z"/></clipPath><clipPath id="cubeSide"><path d="M4 22l28 15 28-15v30L32 68 4 52z"/></clipPath></defs>
          <path d="M32 8l28 13v31L32 68 4 52V21z" fill="#6a4c37"/>
          <g clip-path="url(#cubeSide)"><rect v-for="(p, i) in soil" :key="i" :x="p.x" :y="p.y" width="4" height="4" :fill="p.fill"/><path d="M32 36l28-15v31L32 68z" fill="#000" opacity=".2"/></g>
          <path d="M4 21l28 16 28-16v7l-5 2v3l-5-1v4l-6 1v4l-6-1-6 4-5-4-5 1v-4l-6-1v-4l-6-1v-4l-6-2z" fill="#4f7d31"/>
          <g clip-path="url(#grassTop)"><rect x="4" y="8" width="56" height="30" fill="#6b9c42"/><rect v-for="(p, i) in grass" :key="i" :x="p.x" :y="p.y" width="4" height="3" :fill="p.fill"/></g>
        </svg>
        <svg class="app" viewBox="0 0 64 82"><circle cx="32" cy="38.800" r="26.500" fill="#37797d"/><circle cx="32" cy="37.500" r="26" fill="#4a9da3"/><path d="M32 38c-4-5-7-8-11-8a8 8 0 0 0 0 16c4 0 7-3 11-8s7-8 11-8a8 8 0 0 1 0 16c-4 0-7-3-11-8z" fill="none" stroke="#fff" stroke-width="3.200"/><path d="M18.500 38h6M39.500 38h6M42.500 35v6" stroke="#fff" stroke-width="1.800"/></svg>
        <svg class="app run" viewBox="0 0 64 82"><rect x="8" y="14" width="48" height="48" rx="11" fill="#f4f2ef"/><rect x="11" y="17" width="42" height="42" rx="8" fill="#9dbdf0"/><path d="M11 40h42v8c-14 6-30 3-42 2z" fill="#2d4a80"/><path d="M11 48c14-3 22 3 42 2v4a6 6 0 0 1-6 5H19a8 8 0 0 1-8-7z" fill="#cdd5de"/><path d="M33 49h20l4 14c-8 3-20 3-28 0z" fill="#dedede" stroke="#8d8d8d"/><path d="M32 40c0-3.500 22-3.500 22 0v9c-4 2-18 2-22 0z" fill="#1c1c1c"/><path d="M37 53h12v6H37z" fill="#fff"/></svg>
        <svg class="app" viewBox="0 0 64 82"><rect x="8" y="14" width="48" height="48" rx="11" fill="url(#greyV)"/><circle cx="32" cy="38" r="20" fill="#3b3b3d" stroke="#2a2a2a" stroke-width="2" stroke-dasharray="2 1"/><circle cx="32" cy="38" r="15.500" fill="none" stroke="#9c9c9c" stroke-width="3.500"/><path d="M32 38h15M32 38l-8-13M32 38l-8 13" stroke="#9c9c9c" stroke-width="3"/><circle cx="32" cy="38" r="4" fill="#3b3b3d" stroke="#9c9c9c" stroke-width="2"/><circle cx="53" cy="19" r="11.500" fill="#ea5545"/><text x="53" y="24" text-anchor="middle" font-size="14" fill="#fff">1</text></svg>
        <svg class="app" viewBox="0 0 64 82"><rect x="8" y="14" width="48" height="48" rx="11" fill="#fff"/><path d="M22 24h29v33H17z" fill="#2b6478"/><path d="M14 24l5-6h28v27H22l-8 5z" fill="#56a6cb"/><path d="M14 24l5-6v28l-5 4z" fill="#93c9df"/><path d="M17 47h34v10H17z" fill="#234e60"/><text x="33.500" y="40" text-anchor="middle" font-size="21" font-weight="800" fill="#fff" textLength="17" lengthAdjust="spacingAndGlyphs">M</text><text x="34" y="55" text-anchor="middle" font-size="8" font-weight="700" fill="#fff">AYA</text></svg>
        <svg class="app run" viewBox="0 0 64 82"><rect x="8" y="14" width="48" height="48" rx="11" fill="#fff"/><path d="M22 24h29v33H17z" fill="#7c1330"/><path d="M14 24l5-6h28v27H22l-8 5z" fill="#d8345a"/><path d="M14 24l5-6v28l-5 4z" fill="#ec8ba0"/><path d="M17 47h34v10H17z" fill="#68102a"/><text x="33.500" y="40" text-anchor="middle" font-size="21" font-weight="800" fill="#fff" textLength="14" lengthAdjust="spacingAndGlyphs">A</text><text x="34" y="55" text-anchor="middle" font-size="8" font-weight="700" fill="#fff">CAD</text></svg>
        <span class="rule"></span>
        <svg class="app run" viewBox="0 0 64 82"><rect x="7" y="14" width="50" height="48" rx="11" fill="#2e0402"/><text x="32" y="47.500" text-anchor="middle" font-size="29" font-weight="700" fill="#f39a32" textLength="28" lengthAdjust="spacingAndGlyphs">Ai</text></svg>
        <svg class="app run" viewBox="0 0 64 82"><path d="M31 19l20 15M8 50l22-18M14 28h24" stroke="#e0802f" stroke-width="6" stroke-linecap="round"/><circle cx="41" cy="41" r="19" fill="#e0802f"/><circle cx="41" cy="41" r="12" fill="#fff"/><circle cx="41" cy="41" r="7.600" fill="#2f5687"/></svg>
        <svg class="app run" viewBox="0 0 64 82"><rect x="3.500" y="9.500" width="57" height="57" rx="9" fill="#16305a" stroke="#3f98e6" stroke-width="3.500"/><path d="M48 27c-4-5-10-7-16-7-10 0-16 8-16 18 3-7 8-9 13-7 4 2 5 5 9 8 5-3 6-8 10-12zM48 49c-5 6-10 7-15 7-9 0-16-6-17-16 2-8 7-9 11-6-2 7 1 13 7 14 5 0 7-2 8-5z" fill="#e8eef6"/></svg>
        <span class="rule"></span>
        <svg class="app" viewBox="0 0 64 82"><path d="M4 22h56v32H4z" fill="#39465c"/><path d="M12 25h39v28H12z" fill="#1f252e"/><path d="M19 31h24v3H19zM19 37h24v3H19z" fill="none" stroke="#444d59"/><path d="M5 25h5M5 29h5M5 33h4" stroke="#c8a14a"/><rect x="40" y="46" width="18" height="19" rx="4" fill="#fff"/><rect x="42.500" y="48" width="13" height="15" fill="#d22c50"/><path d="M43 59h13v4H43z" fill="#68102a"/><text x="49.500" y="57" text-anchor="middle" font-size="9" font-weight="800" fill="#fff">A</text></svg>
        <svg class="app" viewBox="0 0 64 82"><path d="M11 16c10 5 32 5 42 0l-4 45c-4 5-30 5-34 0z" fill="#dcdcdc"/><path d="M13 22c8 5 30 5 38 0l-1 18c-10 8-24-4-36 8z" fill="#eeeeee"/><path d="M13 16l5-6 5 3 5-4 4 5 6-5 6 4 6 4c-8 5-28 5-37-1z" fill="#fafafa" stroke="#777" stroke-width=".8"/><path d="M20 17l6-4 4 5zM35 12l9 6h-9z" fill="#444"/><path d="M24 17l3 4 2-4z" fill="#3bb7b0"/><path d="M40 15l3 5 3-4z" fill="#e0803a"/></svg>
      </div>
    </footer>
  </div>
</template>

<style>
html, body { margin: 0; background: #3a332f; }
</style>

<style scoped>
* { box-sizing: border-box; }
.screen { width: 2880px; height: 1800px; overflow: hidden; display: flex; flex-direction: column; font-family: Inter, "Noto Sans CJK JP", sans-serif; font-size: 24px; color: #dadada; white-space: nowrap; background: #93292c; }
.screen span { display: inline-block; }
svg { display: block; flex: none; }
button { font: inherit; color: inherit; margin: 0; padding: 0; }
h3 { margin: 0; font-size: 24px; font-weight: 400; line-height: 32px; height: 30px; color: #d6d6d6; }

.menubar { height: 48px; display: flex; align-items: center; line-height: 48px; font-size: 26px; color: #f6f0f0; background: linear-gradient(90deg, #952b2e 0, #93292c 280px, #944042 680px, #9b6562 1180px, #9f7672 1440px, #9a8884 1720px, #958d8c 2200px, #8f8787 2880px); text-shadow: 0 3px 5px rgba(0, 0, 0, .25); }
.menubar > * { flex: none; }
.menubar .apple { margin: 0 0 3px 39px; }
.menubar .app-name { margin-left: 40px; width: 169px; font-weight: 700; height: 48px; line-height: 46px; }
.menubar .menu { height: 48px; line-height: 46px; }
.menubar .grow { flex: 1; }
.menubar .date { width: 146px; margin-left: 29px; height: 48px; line-height: 46px; }
.menubar .time { width: 109px; height: 48px; line-height: 46px; }
.strip { flex: none; margin-bottom: -10px; height: 12px; background: linear-gradient(90deg, #7d2226 0, #5a0d10 600px, #5a0d10 1100px, #8c8785 1130px, #6c6a69 2000px, #a09c9b 2400px, #6e5053 2750px, #8a3038 2880px); }

.window { position: relative; flex: none; height: 1614px; border: 2px solid #383838; border-radius: 12px 12px 0 0; background: #535353; overflow: hidden; display: flex; flex-direction: column; }
.titlebar { height: 68px; flex: none; border-bottom: 2px solid #383838; display: flex; align-items: center; }
.app-title { width: 272px; margin-left: 1086px; font-size: 26px; line-height: 64px; color: #dcdcdc; }
.share { width: 88px; height: 48px; border: 0; border-radius: 24px; background: #3470e0; color: #fff; margin: -2px 12px 0 auto; line-height: 48px; font-size: 26px; }
.body { flex: 1; display: flex; min-height: 0; }
.gutter { width: 6px; flex: none; background: #4a4a4a; border: solid #383838; border-width: 0 2px; }

.toolbar { width: 76px; flex: none; display: flex; flex-direction: column; }
.tool-head { height: 24px; flex: none; background: #424242; border-bottom: 2px solid #383838; }
.grip { height: 38px; flex: none; padding: 6px 0 0 18px; display: flex; gap: 2px; }
.grip i { width: 2px; height: 8px; background: #363636; }
.tools { display: flex; flex-direction: column; flex: none; }
.tools svg { width: 76px; height: 48px; fill: #c4c4c4; }

.document { width: 2288px; flex: none; display: flex; flex-direction: column; }
.tabs { height: 58px; flex: none; background: #424242; border-bottom: 2px solid #383838; display: flex; }
.tab { border-right: 2px solid #383838; height: 56px; line-height: 54px; display: flex; align-items: center; gap: 19px; padding-left: 15px; color: #a9a9a9; flex: none; }
.tab.active { background: #535353; color: #fff; }
.tab svg { margin-top: -1px; }
.workspace { height: 1452px; flex: none; display: flex; }
.canvas { background: #606060; }
.vscroll { width: 32px; background: #4a4a4a; display: flex; flex-direction: column; }
.vthumb { display: block; width: 30px; height: 50px; border-radius: 15px; background: #606060; margin: 670px 0 0 2px; }
.vscroll .end { margin-top: auto; }
.status { height: 32px; flex: none; overflow: hidden; display: flex; align-items: flex-start; padding-left: 6px; background: #4e4e4e; }
.status > * { flex: none; }
.field { margin-top: 2px; height: 40px; line-height: 40px; background: #424242; color: #fff; border: 1px solid #5c5c5c; border-radius: 4px 0 0 0; padding-left: 6px; }
.zoom { width: 103px; }
.rot { width: 102px; margin-left: 8px; line-height: 43px; }
.page { width: 82px; padding-left: 8px; }
.drop { margin-top: 2px; height: 40px; width: 36px; background: #4a4a4a; border: 1px solid #5c5c5c; border-left: 0; border-radius: 0 4px 0 0; display: flex; align-items: center; justify-content: center; padding-right: 4px; }
.drop svg path, .dd svg path, .spin svg path { fill: none; stroke: #fff; stroke-width: 2.200; }
.nav { background: #535353; }
.hint { width: 402px; height: 32px; margin-top: 2px; background: #535353; border: solid #484848; border-width: 0 2px; padding-left: 50px; font-size: 20px; line-height: 37px; color: #d0d0d0; }
.hscroll { width: 1246px; height: 32px; background: #4a4a4a; display: flex; }
.hthumb { display: block; width: 50px; height: 30px; border-radius: 15px; background: #606060; margin: 2px 564px 0 568px; }

.panel { width: 500px; flex: none; display: flex; flex-direction: column; }
.panel-head { height: 24px; flex: none; background: #424242; border-bottom: 2px solid #383838; display: flex; justify-content: flex-end; }
.ptabs { height: 54px; flex: none; display: flex; background: #424242; box-shadow: inset 0 -2px #383838; }
.ptab { border-right: 2px solid #383838; line-height: 51px; color: #a9a9a9; overflow: hidden; flex: none; height: 54px; }
.ptab.on { width: 146px; background: #535353; color: #fff; padding-left: 18px; }
.ptab.second { width: 108px; padding-left: 17px; }
.ptab.third { width: 168px; padding-left: 16px; }
.sec { width: 476px; flex: none; border-bottom: 2px solid #4b4b4b; padding-left: 20px; }
.kind { height: 67px; padding-top: 18px; }
.transform { height: 250px; padding-top: 20px; }
.xy { margin-top: 11px; display: grid; grid-template-columns: 60px 40px 112px 31px 47px 113px 20px 30px; grid-template-rows: 42px 42px; row-gap: 10px; font-size: 25px; }
.xy label { grid-column: 2; grid-row: 1; line-height: 43px; color: #cfcfcf; }
.xy .c5 { grid-column: 5; }
.xy .r2 { grid-row: 2; }
.box { border: 2px solid #606060; border-radius: 4px; background: #424242; color: #fff; line-height: 40px; font-size: 26px; padding: 0 5px 0 8px; overflow: clip; overflow-clip-margin: content-box; }
.box.wide { grid-column: 6; padding-left: 9px; }
.r2c3 { grid-column: 3; grid-row: 2; }
.r2c6 { grid-column: 6; grid-row: 2; }
.ref { grid-row: 1 / 3; grid-column: 1; align-self: center; }
.link { grid-row: 1 / 3; grid-column: 8; align-self: center; }
.angle { margin: 10px 0 0 51px; height: 42px; display: flex; }
.combo { display: flex; height: 42px; border: 2px solid #606060; border-radius: 4px; background: #424242; color: #fff; font-size: 26px; overflow: hidden; }
.angle .combo { width: 113px; margin-left: 13px; }
.val { flex: 1; padding-left: 8px; line-height: 42px; }
.dd { width: 36px; border-left: 2px solid #606060; background: #4a4a4a; display: flex; align-items: center; justify-content: center; padding-right: 3px; }
.spin { width: 36px; border-right: 2px solid #606060; background: #4a4a4a; display: flex; align-items: center; justify-content: center; }
.flips { margin-left: 81px; }
.more { display: flex; gap: 3px; height: 30px; align-items: center; padding-left: 413px; }
.more i { width: 7.500px; height: 7.500px; border-radius: 50%; background: #c4c4c4; }
.more.tall { height: 44px; }
.appear { height: 340px; padding-top: 19px; }
.appear h3 { margin-bottom: 18px; }
.row { height: 42px; margin-bottom: 16px; display: flex; align-items: center; }
.row .plain { margin: 5px 0 0 24px; color: #cfcfcf; line-height: 30px; }
.row .dotted { margin: 1px 0 0 24px; color: #fff; line-height: 28px; height: 30px; border-bottom: 2px dotted #c8c8c8; }
.weight { width: 140px; margin-left: auto; margin-right: 134px; }
.val.pt { line-height: 46px; padding-left: 9px; font-size: 25px; }
.val.pct { line-height: 46px; padding-left: 7px; }
.fx { margin: 2px 0 0 13px; height: 62px; line-height: 58px; display: flex; font-family: "Open Sans", Inter, sans-serif; font-style: italic; font-size: 26px; color: #c4c4c4; }
.fx svg { margin: 39px 0 0 1px; }
.align { height: 166px; padding-top: 20px; }
.align h3 { margin-bottom: 20px; }
.align .more { margin-top: 15px; }
.quick { padding: 30px 26px 0 20px; }
.quick h3 { margin-bottom: 17px; }
.act { display: block; width: 454px; height: 42px; margin-bottom: 20px; border: 2px solid #757575; border-radius: 4px; background: transparent; color: #fff; line-height: 38px; text-align: center; }
.split { display: flex; gap: 1px; }
.split .act { width: 410px; }
.split .arrow { width: 43px; background: #4a4a4a; display: flex; align-items: center; justify-content: center; padding-right: 2px; }
.arrow path { fill: none; stroke: #c4c4c4; stroke-width: 2; }

.desktop { position: relative; height: 136px; flex: none; overflow: hidden; }
.backdrop { filter: blur(4px); }
.wall { display: flex; height: 94px; }
.wall.low { height: 50px; }
.wall i { width: 80px; }
.shade { position: absolute; inset: 0 0 auto 0; height: 60px; background: linear-gradient(rgba(15, 12, 10, .65), rgba(15, 12, 10, 0)); }
.edge { position: absolute; left: 480px; top: 0; width: 1860px; height: 2px; background: #a2a2a0; border-radius: 0 0 6px 6px; }
.dock { position: absolute; left: 542px; top: 44px; width: 1796px; height: 82px; border-radius: 22px; background: linear-gradient(90deg, #8f837c, #94897b 20%, #908373 50%, #9f9180 75%, #8c827c); box-shadow: inset 0 0 0 2px #a59a90, 0 0 3px rgba(0, 0, 0, .5); padding: 0 6px; display: flex; }
.app { width: 64px; height: 82px; overflow: visible; }
.run { background: radial-gradient(circle at 31px 75px, #150c06 0, #150c06 2.800px, transparent 3.600px); }
.rule { width: 28px; height: 58px; margin-top: 12px; background: linear-gradient(90deg, transparent 14px, #62584e 14px, #62584e 16px, transparent 16px); flex: none; }
</style>
